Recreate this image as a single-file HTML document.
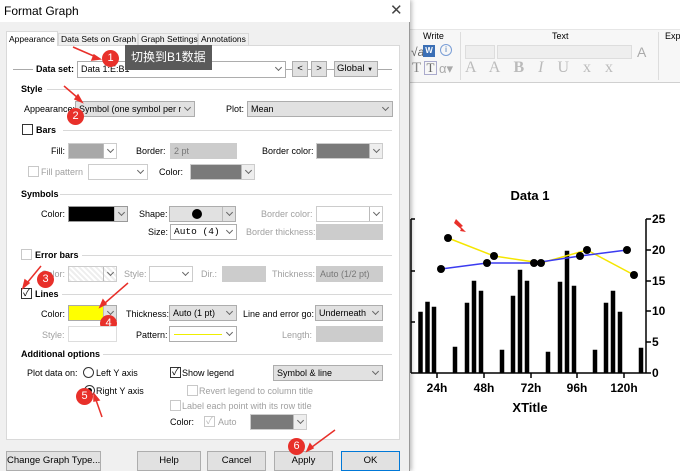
<!DOCTYPE html>
<html><head><meta charset="utf-8"><style>
*{margin:0;padding:0;box-sizing:border-box}
body{width:680px;height:471px;overflow:hidden;position:relative;background:#fff;font-family:"Liberation Sans","Noto Sans CJK SC",sans-serif;font-size:9px;color:#000;white-space:nowrap}
.a{position:absolute;white-space:nowrap}
.b{font-weight:bold}
.d{color:#a0a0a0}
.ln{position:absolute;height:1px;background:#d8d8d8}
.cb{position:absolute;width:11px;height:11px;border:1px solid #333;background:#fff}
.cbd{border-color:#c8c8c8}
.box{position:absolute;height:16px;border:1px solid #adadad;background:#fff;font-size:9px;line-height:14px;padding-left:3px;overflow:hidden}
.g{background:#e1e1e1}
.dis{background:#cccccc;border-color:#cccccc;color:#777}
.dd{position:absolute;right:0;top:0;width:13px;height:14px;border-left:1px solid #bbb;font-size:0}
.dd::after{content:"";position:absolute;left:4px;top:3px;width:4px;height:4px;border-right:1px solid #666;border-bottom:1px solid #666;transform:rotate(45deg)}
.btn{position:absolute;height:20px;border:1px solid #adadad;background:#e1e1e1;text-align:center;line-height:18px;font-size:9.5px;overflow:hidden}
.rc{position:absolute;width:17px;height:17px;border-radius:50%;background:#e8302a;color:#fff;font-size:11px;text-align:center;line-height:17px}
</style></head><body>
<!-- right app area -->
<div class="a" style="left:410px;top:29px;width:270px;height:54px;background:#f7f7f7;border-bottom:1px solid #d0d0d0;border-top:1px solid #e6e6e6"></div>
<div class="a" style="left:423px;top:31px;font-size:9px">Write</div>
<div class="a" style="left:552px;top:31px;font-size:9px">Text</div>
<div class="a" style="left:665px;top:31px;font-size:9px">Expo</div>
<div class="a" style="left:460px;top:32px;width:1px;height:48px;background:#ddd"></div>
<div class="a" style="left:658px;top:32px;width:1px;height:48px;background:#ddd"></div>
<div class="a" style="left:411px;top:45px;font-size:12px;color:#666;font-style:italic">√a</div>
<div class="a" style="left:423px;top:45px;width:12px;height:12px;background:#3b6fb5;color:#fff;font-size:8px;text-align:center;font-weight:bold;line-height:12px">W</div>
<div class="a" style="left:440px;top:44px;width:12px;height:12px;border:1px solid #7a9ed6;border-radius:50%;font-size:8px;text-align:center;color:#3b6fb5">i</div>
<div class="a" style="left:412px;top:60px;font-size:15px;color:#888;font-family:'Liberation Serif'">T</div>
<div class="a" style="left:424px;top:61px;width:13px;height:14px;border:1px solid #aac;font-size:13px;color:#666;font-family:'Liberation Serif';text-align:center;line-height:12px">T</div>
<div class="a" style="left:439px;top:61px;font-size:13px;color:#aaa">α▾</div>
<div class="a" style="left:465px;top:45px;width:30px;height:14px;background:#eee;border:1px solid #ddd"></div>
<div class="a" style="left:497px;top:45px;width:135px;height:14px;background:#eee;border:1px solid #ddd"></div>
<div class="a" style="left:465px;top:59px;font-size:16px;color:#bbb;font-family:'Liberation Serif';letter-spacing:5px">A A <b>B</b> <i>I</i> U x x</div>
<div class="a" style="left:637px;top:44px;font-size:14px;color:#aaa">A</div>
<!-- chart -->
<svg class="a" style="left:405px;top:180px" width="275" height="240" viewBox="405 180 275 240">
<text x="530" y="200" font-family="Liberation Sans" font-weight="bold" font-size="13" text-anchor="middle">Data 1</text>
<g fill="#000" stroke="#000" stroke-width="0.5">
<rect x="418.5" y="312" width="4" height="61"/><rect x="425.5" y="302" width="4" height="71"/><rect x="432" y="307" width="4" height="66"/>
<rect x="453" y="347" width="4" height="26"/><rect x="465" y="303" width="4" height="70"/><rect x="472" y="281" width="4" height="92"/><rect x="479" y="291" width="4" height="82"/>
<rect x="500" y="350" width="4" height="23"/><rect x="511" y="296" width="4" height="77"/><rect x="518" y="270" width="4" height="103"/><rect x="525" y="281" width="4" height="92"/>
<rect x="546" y="352" width="4" height="21"/><rect x="558" y="282" width="4" height="91"/><rect x="565" y="251" width="4" height="122"/><rect x="572" y="286" width="4" height="87"/>
<rect x="593" y="350" width="4" height="23"/><rect x="604" y="303" width="4" height="70"/><rect x="611" y="291" width="4" height="82"/><rect x="618" y="312" width="4" height="61"/>
<rect x="639" y="348" width="4" height="25"/>
</g>
<g stroke="#000" stroke-width="1.5" fill="none">
<path d="M411 373H646M646 219V373M646 219h5M646 250h5M646 281h5M646 311h5M646 342h5M646 373h5M437 373v5M484 373v5M531 373v5M577 373v5M624 373v5M411 219h4M411 271h4M411 322h4M411 219V373"/>
</g>
<polyline points="448,238 494,256 541,263 587,250 634,275" stroke="#f5e600" stroke-width="1.5" fill="none"/>
<polyline points="441,269 487,263 534,263 580,256 627,250" stroke="#3b3bf0" stroke-width="1.5" fill="none"/>
<g fill="#000"><circle cx="448" cy="238" r="4"/><circle cx="494" cy="256" r="4"/><circle cx="541" cy="263" r="4"/><circle cx="587" cy="250" r="4"/><circle cx="634" cy="275" r="4"/>
<circle cx="441" cy="269" r="4"/><circle cx="487" cy="263" r="4"/><circle cx="534" cy="263" r="4"/><circle cx="580" cy="256" r="4"/><circle cx="627" cy="250" r="4"/></g>
<g font-family="Liberation Sans" font-weight="bold" font-size="12">
<text x="652" y="223">25</text><text x="652" y="254">20</text><text x="652" y="285">15</text><text x="652" y="315">10</text><text x="652" y="346">5</text><text x="652" y="377">0</text>
<text x="437" y="392" text-anchor="middle">24h</text><text x="484" y="392" text-anchor="middle">48h</text><text x="531" y="392" text-anchor="middle">72h</text><text x="577" y="392" text-anchor="middle">96h</text><text x="624" y="392" text-anchor="middle">120h</text>
<text x="530" y="412" text-anchor="middle" font-size="13">XTitle</text></g>
<path d="M456 219l7 7-2 1 5 5-6-1 1-2-7-6z" fill="#e8302a"/>
</svg>
<!-- dialog -->
<div class="a" style="left:0;top:0;width:410px;height:471px;background:#f0f0f0;border-right:1px solid #999;box-shadow:2px 0 4px rgba(0,0,0,.25)"></div>
<div class="a" style="left:0;top:0;width:410px;height:22px;background:#fff"></div>
<div class="a" style="left:4px;top:4px;font-size:12px">Format Graph</div>
<div class="a" style="left:390px;top:1px;font-size:15px;color:#444">✕</div>
<div class="a" style="left:6px;top:45px;width:394px;height:395px;background:#fff;border:1px solid #d9d9d9"></div>
<div class="a" style="left:6px;top:31px;width:52px;height:15px;background:#fff;border:1px solid #d9d9d9;border-bottom:none;padding:2px 2px;font-size:8.5px">Appearance</div>
<div class="a" style="left:58px;top:33px;width:80px;height:12px;border:1px solid #d9d9d9;border-bottom:none;padding-left:2px;line-height:11px;font-size:8.5px">Data Sets on Graph</div>
<div class="a" style="left:138px;top:33px;width:60px;height:12px;border:1px solid #d9d9d9;border-bottom:none;padding-left:2px;line-height:11px;font-size:8.5px">Graph Settings</div>
<div class="a" style="left:198px;top:33px;width:51px;height:12px;border:1px solid #d9d9d9;border-bottom:none;padding-left:2px;line-height:11px;font-size:8.5px">Annotations</div>

<div class="ln" style="left:13px;top:69px;width:20px;background:#aaa"></div>
<div class="a b" style="left:36px;top:64px">Data set:</div>
<div class="box" style="left:77px;top:61px;width:209px;height:17px">Data 1:E:B1<span class="dd" style="border:none"></span></div>
<div class="ln" style="left:286px;top:69px;width:106px;background:#aaa"></div>
<div class="btn" style="left:292px;top:61px;width:16px;height:16px;line-height:14px">&lt;</div>
<div class="btn" style="left:311px;top:61px;width:16px;height:16px;line-height:14px">&gt;</div>
<div class="btn" style="left:334px;top:61px;width:44px;height:16px;line-height:14px;text-align:left;padding-left:2px">Global <span style="font-size:6px">▼</span></div>
<div class="a" style="left:125px;top:45px;width:87px;height:25px;background:#5a5a5a;color:#fff;font-size:12px;line-height:25px;padding-left:6px">切换到B1数据</div>
<div class="rc" style="left:102px;top:50px">1</div>

<div class="a b" style="left:21px;top:84px">Style</div><div class="ln" style="left:47px;top:89px;width:345px"></div>
<div class="a" style="left:24px;top:104px">Appearance:</div>
<div class="box g" style="left:75px;top:101px;width:120px">Symbol (one symbol per ro<span class="dd" style="border:none;background:#e1e1e1"></span></div>
<div class="a" style="left:226px;top:104px">Plot:</div>
<div class="box g" style="left:247px;top:101px;width:146px">Mean<span class="dd" style="border:none"></span></div>
<div class="rc" style="left:67px;top:108px">2</div>

<div class="cb" style="left:22px;top:124px"></div><div class="a b" style="left:36px;top:125px">Bars</div><div class="ln" style="left:63px;top:130px;width:329px"></div>
<div class="a" style="left:51px;top:146px">Fill:</div>
<div class="box" style="left:68px;top:143px;width:49px;background:#a8a8a8;border-color:#ccc"><span class="dd" style="background:#fff"></span></div>
<div class="a" style="left:136px;top:146px">Border:</div>
<div class="box dis" style="left:170px;top:143px;width:67px">2 pt</div>
<div class="a" style="left:262px;top:146px">Border color:</div>
<div class="box" style="left:316px;top:143px;width:67px;background:#7a7a7a;border-color:#ccc"><span class="dd" style="background:#eee"></span></div>

<div class="cb cbd" style="left:28px;top:166px"></div><div class="a d" style="left:41px;top:167px">Fill pattern</div>
<div class="box" style="left:88px;top:164px;width:60px;border-color:#ccc"><span class="dd" style="border:none"></span></div>
<div class="a" style="left:159px;top:167px">Color:</div>
<div class="box" style="left:190px;top:164px;width:65px;background:#7a7a7a;border-color:#ccc"><span class="dd" style="background:#eee"></span></div>

<div class="a b" style="left:21px;top:189px">Symbols</div><div class="ln" style="left:60px;top:194px;width:332px"></div>
<div class="a" style="left:41px;top:209px">Color:</div>
<div class="box" style="left:68px;top:206px;width:60px;background:#000;border-color:#999"><span class="dd" style="background:#e1e1e1"></span></div>
<div class="a" style="left:139px;top:209px">Shape:</div>
<div class="box g" style="left:169px;top:206px;width:67px"><span style="position:absolute;left:22px;top:2px;width:10px;height:10px;border-radius:50%;background:#000"></span><span class="dd"></span></div>
<div class="a d" style="left:261px;top:209px">Border color:</div>
<div class="box" style="left:316px;top:206px;width:67px;border-color:#ccc"><span class="dd"></span></div>
<div class="a" style="left:148px;top:227px">Size:</div>
<div class="box" style="left:170px;top:224px;width:67px;font-family:'Liberation Mono';font-size:9.5px">Auto (4)<span class="dd" style="border:none"></span></div>
<div class="a d" style="left:246px;top:227px">Border thickness:</div>
<div class="box dis" style="left:316px;top:224px;width:67px"></div>

<div class="cb cbd" style="left:21px;top:249px"></div><div class="a b" style="left:35px;top:250px">Error bars</div><div class="ln" style="left:82px;top:255px;width:310px"></div>
<div class="a d" style="left:41px;top:269px">Color:</div>
<div class="box" style="left:68px;top:266px;width:49px;border-color:#ccc;background:repeating-linear-gradient(45deg,#eee 0 2px,#fff 2px 4px)"><span class="dd"></span></div>
<div class="a d" style="left:124px;top:269px">Style:</div>
<div class="box" style="left:149px;top:266px;width:44px;border-color:#ccc"><span class="dd" style="border:none"></span></div>
<div class="a d" style="left:201px;top:269px">Dir.:</div>
<div class="box dis" style="left:222px;top:266px;width:44px"></div>
<div class="a d" style="left:272px;top:269px">Thickness:</div>
<div class="box dis" style="left:316px;top:266px;width:67px">Auto (1/2 pt)</div>
<div class="rc" style="left:37px;top:271px">3</div>

<div class="cb" style="left:21px;top:288px;font-size:10px;line-height:9px;text-align:center">✓</div><div class="a b" style="left:35px;top:289px">Lines</div><div class="ln" style="left:62px;top:294px;width:330px"></div>
<div class="a" style="left:41px;top:309px">Color:</div>
<div class="box" style="left:68px;top:305px;width:49px;background:#ffff00;border-color:#aaa"><span class="dd" style="background:#e1e1e1"></span></div>
<div class="a" style="left:126px;top:309px">Thickness:</div>
<div class="box g" style="left:169px;top:305px;width:68px">Auto (1 pt)<span class="dd" style="border:none"></span></div>
<div class="a" style="left:243px;top:309px">Line and error go:</div>
<div class="box g" style="left:315px;top:305px;width:68px">Underneath<span class="dd" style="border:none"></span></div>
<div class="rc" style="left:100px;top:315px">4</div>
<div class="a d" style="left:42px;top:330px">Style:</div>
<div class="box" style="left:68px;top:326px;width:49px;border-color:#ddd"></div>
<div class="a" style="left:136px;top:330px">Pattern:</div>
<div class="box" style="left:169px;top:326px;width:68px"><span style="position:absolute;left:4px;top:7px;width:48px;height:1px;background:#ee0"></span><span class="dd" style="border:none"></span></div>
<div class="a d" style="left:282px;top:330px">Length:</div>
<div class="box dis" style="left:316px;top:326px;width:67px"></div>

<div class="a b" style="left:21px;top:349px">Additional options</div><div class="ln" style="left:103px;top:354px;width:289px"></div>
<div class="a" style="left:27px;top:368px">Plot data on:</div>
<div class="a" style="left:83px;top:367px;width:11px;height:11px;border:1px solid #333;border-radius:50%;background:#fff"></div>
<div class="a" style="left:96px;top:368px">Left Y axis</div>
<div class="a" style="left:84px;top:385px;width:11px;height:11px;border:1px solid #333;border-radius:50%;background:#fff"><div style="margin:2px;width:5px;height:5px;border-radius:50%;background:#000"></div></div>
<div class="a" style="left:96px;top:386px">Right  Y axis</div>
<div class="rc" style="left:76px;top:388px">5</div>
<div class="cb" style="left:170px;top:367px;font-size:10px;line-height:9px;text-align:center">✓</div><div class="a" style="left:182px;top:368px">Show legend</div>
<div class="box g" style="left:273px;top:365px;width:110px">Symbol &amp; line<span class="dd" style="border:none"></span></div>
<div class="cb cbd" style="left:187px;top:385px"></div><div class="a d" style="left:199px;top:386px">Revert legend to column title</div>
<div class="cb cbd" style="left:170px;top:400px"></div><div class="a d" style="left:182px;top:401px">Label each point with its row title</div>
<div class="a" style="left:170px;top:417px">Color:</div>
<div class="cb cbd" style="left:204px;top:416px;color:#bbb;font-size:10px;line-height:9px;text-align:center">✓</div><div class="a d" style="left:218px;top:417px">Auto</div>
<div class="box" style="left:250px;top:414px;width:57px;background:#7a7a7a;border-color:#ccc"><span class="dd" style="background:#eee"></span></div>

<div class="btn" style="left:6px;top:451px;width:95px">Change Graph Type...</div>
<div class="btn" style="left:137px;top:451px;width:64px">Help</div>
<div class="btn" style="left:207px;top:451px;width:59px">Cancel</div>
<div class="btn" style="left:274px;top:451px;width:59px">Apply</div>
<div class="btn" style="left:341px;top:451px;width:59px;border-color:#0078d7">OK</div>
<div class="rc" style="left:288px;top:438px">6</div>
<svg class="a" style="left:0;top:0" width="410" height="471">
<g stroke="#e8302a" stroke-width="1.5" fill="#e8302a">
<line x1="73" y1="47" x2="96" y2="57"/><path d="M100 59l-8 1 2-5z"/>
<line x1="64" y1="86" x2="78" y2="98"/><path d="M82 102l-7-3 3-4z"/>
<line x1="41" y1="266" x2="27" y2="283"/><path d="M23 288l2-8 4 3z"/>
<line x1="128" y1="283" x2="105" y2="303"/><path d="M100 307l3-7 3 4z"/>
<line x1="102" y1="417" x2="96" y2="400"/><path d="M94 394l5 6-5 1z"/>
<line x1="335" y1="430" x2="312" y2="447"/><path d="M307 451l3-7 3 4z"/>
</g></svg>
</body></html>
